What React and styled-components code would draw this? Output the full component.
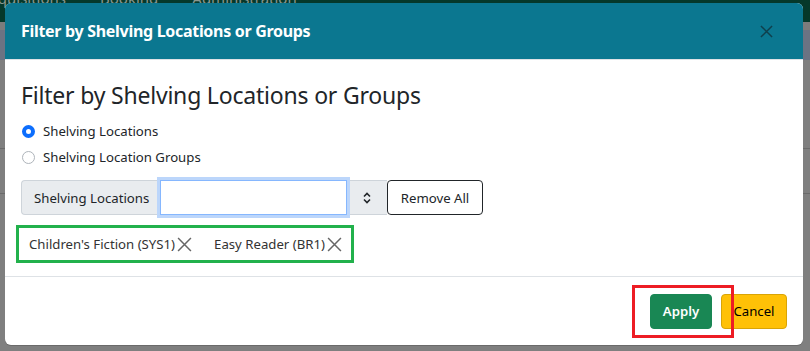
import styled, { createGlobalStyle } from "styled-components";

const GlobalStyle = createGlobalStyle`
  html, body {
    margin: 0;
    padding: 0;
    background: #7f7f7f;
    font-family: "Noto Sans", "Open Sans", sans-serif;
  }
  * { box-sizing: border-box; }
`;

const Page = styled.div`
  position: relative;
  width: 810px;
  height: 351px;
  overflow: hidden;
  background: #7f7f7f;
`;

const NavBar = styled.div`
  height: 22px;
  background: #05382a;
  display: flex;
  align-items: flex-end;
  padding-left: 3px;
  gap: 34px;

  span {
    color: #8a968f;
    font-size: 15px;
    line-height: 15px;
    white-space: nowrap;
    margin-bottom: 16px;
  }
`;

const SubBar = styled.div`
  height: 38px;
  background: #6b7383;
  border-top: 8px solid #7c7c7c;
`;

const Line = styled.div`
  height: 1px;
  background: #6a6a6a;
  margin-top: ${(p) => p.$top}px;
`;

const Modal = styled.div`
  position: absolute;
  top: 3px;
  left: 5px;
  width: 798px;
  height: 342px;
  background: #fff;
  border-radius: 6px;
  overflow: hidden;
  display: flex;
  flex-direction: column;
  box-shadow: 0 1px 0 #6a6a6a;
`;

const Header = styled.div`
  height: 57px;
  flex: none;
  background: #0b7790;
  display: flex;
  align-items: center;
  justify-content: space-between;
  padding: 0 30px 0 16px;
  border-bottom: 1px solid #dee2e6;
`;

const Title = styled.h5`
  margin: 0;
  color: #fff;
  font-size: 16px;
  font-weight: 700;
  letter-spacing: -0.3px;
  white-space: nowrap;
`;

const CloseButton = styled.button`
  border: none;
  background: transparent;
  padding: 0;
  display: flex;
  cursor: pointer;
`;

const Body = styled.div`
  flex: 1;
  padding: 20px 11px 0 16px;
  border-bottom: 1px solid #dee2e6;
`;

const Heading = styled.h3`
  margin: 0 0 8px;
  font-size: 23px;
  font-weight: 400;
  line-height: 30px;
  color: #212529;
  letter-spacing: -0.2px;
  white-space: nowrap;
`;

const RadioRow = styled.label`
  display: flex;
  align-items: center;
  gap: 8px;
  height: 26px;
  padding-left: 1px;
  font-size: 13.2px;
  color: #212529;
  white-space: nowrap;
`;

const RadioDot = styled.span`
  width: 13px;
  height: 13px;
  border-radius: 50%;
  flex: none;
  border: ${(p) => (p.$checked ? "4px solid #0d6efd" : "1px solid #aeb4ba")};
  background: #fff;
`;

const InputGroup = styled.div`
  display: flex;
  align-items: stretch;
  height: 35px;
  margin-top: 10px;
`;

const GroupLabel = styled.span`
  display: flex;
  align-items: center;
  padding: 0 0 0 12px;
  background: #e9ecef;
  border: 1px solid #ced4da;
  border-right: none;
  border-radius: 4px 0 0 4px;
  font-size: 13.2px;
  color: #212529;
  width: 139px;
  white-space: nowrap;
  overflow: hidden;
`;

const TextInput = styled.div`
  width: 187px;
  background: #fff;
  border: 1px solid #86b7fe;
  box-shadow: 0 0 0 3px #bcd6fb;
  position: relative;
  z-index: 1;
`;

const Spinner = styled.span`
  width: 40px;
  display: flex;
  align-items: center;
  justify-content: center;
  background: #e9ecef;
  border: 1px solid #ced4da;
  border-left: none;
  border-right: none;
`;

const OutlineButton = styled.button`
  width: 96px;
  border: 1px solid #212529;
  border-radius: 4px;
  background: #fff;
  font-family: inherit;
  font-size: 13.2px;
  color: #212529;
  padding: 0;
  white-space: nowrap;
`;

const TagBox = styled.div`
  display: flex;
  align-items: center;
  gap: 22px;
  margin: 10px 0 0 -5px;
  width: 338px;
  height: 38px;
  padding: 0 10px;
  border: 3px solid #22b14c;
`;

const Tag = styled.span`
  display: inline-flex;
  align-items: center;
  gap: 2px;
  font-size: 13.2px;
  color: #333;
  white-space: nowrap;
`;

const Footer = styled.div`
  height: 68px;
  flex: none;
  display: flex;
  justify-content: flex-end;
  align-items: center;
  gap: 8px;
  padding: 0 16px 0 0;
`;

const Highlight = styled.div`
  display: flex;
  align-items: center;
  justify-content: flex-end;
  width: 102px;
  height: 53px;
  border: 3px solid #ed1c24;
  padding-right: 19px;
  margin-right: -21px;
  position: relative;
  z-index: 2;
`;

const ActionButton = styled.button`
  height: 35px;
  padding: 0;
  border-radius: 4px;
  font-family: inherit;
  font-size: 13.2px;
  border: 1px solid ${(p) => (p.$variant === "warning" ? "#d9a406" : "#198754")};
  background: ${(p) => (p.$variant === "warning" ? "#ffc107" : "#198754")};
  color: ${(p) => (p.$variant === "warning" ? "#000" : "#fff")};
  width: ${(p) => p.$w}px;
  font-weight: ${(p) => (p.$variant === "warning" ? 400 : 600)};
`;

const Cross = ({ size = 14, color = "#666", width = 1.4 }) => (
  <svg width={size} height={size} viewBox="0 0 14 14">
    <path d="M1 1L13 13M13 1L1 13" stroke={color} strokeWidth={width} fill="none" />
  </svg>
);

export default function App() {
  return (
    <Page>
      <GlobalStyle />
      <NavBar>
        <span style={{ marginLeft: -22 }}>Acquisitions</span>
        <span>Booking</span>
        <span>Administration</span>
      </NavBar>
      <SubBar />
      <Line $top={88} />
      <Line $top={44} />
      <Modal>
        <Header>
          <Title>Filter by Shelving Locations or Groups</Title>
          <CloseButton aria-label="Close">
            <Cross size={13} color="#0f3f4c" width={1.6} />
          </CloseButton>
        </Header>
        <Body>
          <Heading>Filter by Shelving Locations or Groups</Heading>
          <RadioRow>
            <RadioDot $checked />
            Shelving Locations
          </RadioRow>
          <RadioRow>
            <RadioDot />
            Shelving Location Groups
          </RadioRow>
          <InputGroup>
            <GroupLabel>Shelving Locations</GroupLabel>
            <TextInput />
            <Spinner>
              <svg width="8" height="12" viewBox="0 0 8 12">
                <path d="M1 4.5L4 1.5L7 4.5M1 7.5L4 10.5L7 7.5" stroke="#212529" strokeWidth="1.6" fill="none" />
              </svg>
            </Spinner>
            <OutlineButton>Remove All</OutlineButton>
          </InputGroup>
          <TagBox>
            <Tag>
              Children's Fiction (SYS1)
              <Cross size={15} />
            </Tag>
            <Tag>
              Easy Reader (BR1)
              <Cross size={15} />
            </Tag>
          </TagBox>
        </Body>
        <Footer>
          <Highlight>
            <ActionButton $w={62}>Apply</ActionButton>
          </Highlight>
          <ActionButton $variant="warning" $w={66}>Cancel</ActionButton>
        </Footer>
      </Modal>
    </Page>
  );
}
